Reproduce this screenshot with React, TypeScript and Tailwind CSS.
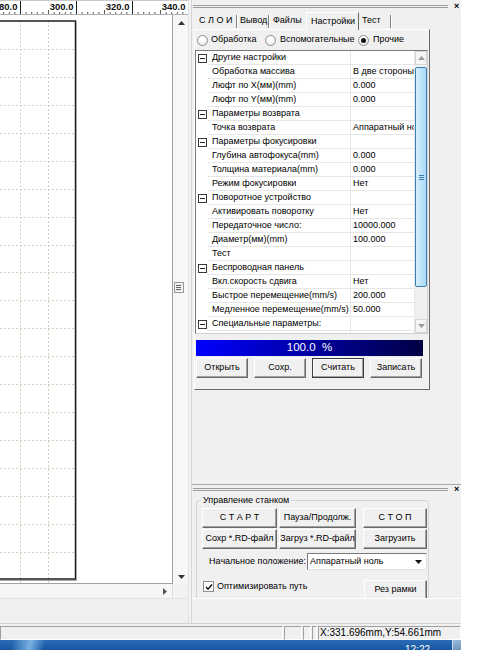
import React from "react";

type Row = { group?: boolean; name: string; value?: string };

const rows: Row[] = [
  { group: true, name: "Другие настройки" },
  { name: "Обработка массива", value: "В две стороны" },
  { name: "Люфт по X(мм)(mm)", value: "0.000" },
  { name: "Люфт по Y(мм)(mm)", value: "0.000" },
  { group: true, name: "Параметры возврата" },
  { name: "Точка возврата", value: "Аппаратный ноль" },
  { group: true, name: "Параметры фокусировки" },
  { name: "Глубина автофокуса(mm)", value: "0.000" },
  { name: "Толщина материала(mm)", value: "0.000" },
  { name: "Режим фокусировки", value: "Нет" },
  { group: true, name: "Поворотное устройство" },
  { name: "Активировать поворотку", value: "Нет" },
  { name: "Передаточное число:", value: "10000.000" },
  { name: "Диаметр(мм)(mm)", value: "100.000" },
  { name: "Тест" },
  { group: true, name: "Беспроводная панель" },
  { name: "Вкл.скорость сдвига", value: "Нет" },
  { name: "Быстрое перемещение(mm/s)", value: "200.000" },
  { name: "Медленное перемещение(mm/s)", value: "50.000" },
  { group: true, name: "Специальные параметры:" },
  { name: "" },
];

function Ruler() {
  const majors = [
    { x: 20.5, l: "280.0" },
    { x: 76.5, l: "300.0" },
    { x: 132.5, l: "320.0" },
    { x: 188.5, l: "340.0" },
  ];
  const ticks: number[] = [];
  for (let i = -3; i < 30; i++) ticks.push(i);
  return (
    <svg width="188" height="15" className="block bg-white">
      <line x1="0" y1="0.5" x2="188" y2="0.5" stroke="#c8c8c8" />
      {ticks.map((i) => {
        const x = 20.5 + i * 5.6;
        if (i % 10 === 0) return null;
        const h = i % 5 === 0 ? 4 : 2;
        return <line key={i} x1={x} y1={14 - h} x2={x} y2={14} stroke="#333" strokeWidth="0.8" />;
      })}
      {majors.map((m) => (
        <g key={m.l}>
          <line x1={m.x} y1="1" x2={m.x} y2="15" stroke="#222" />
          <text x={m.x - 3} y="10" textAnchor="end" fontSize="9.5" fontWeight="bold" fill="#111" fontFamily="Liberation Sans, Arial, sans-serif">
            {m.l}
          </text>
        </g>
      ))}
      <line x1="0" y1="14.5" x2="188" y2="14.5" stroke="#b0b0b0" />
    </svg>
  );
}

function CanvasDrawing() {
  const hLines: number[] = [];
  for (let y = 34; y < 564; y += 27.93) hLines.push(Math.round(y) + 0.5);
  return (
    <svg width="173" height="569" className="block bg-white">
      {[20.5, 48.5].map((x) => (
        <line key={x} x1={x} y1="6" x2={x} y2="569" stroke="#cfcfbd" strokeDasharray="2 2" />
      ))}
      {hLines.map((y) => (
        <line key={y} x1="0" y1={y} x2="75" y2={y} stroke="#cfcfbd" strokeDasharray="2 2" />
      ))}
      <rect x="-2" y="6" width="77.5" height="558" fill="none" stroke="#1e1e1e" strokeWidth="1.5" />
      <line x1="0" y1="565.5" x2="77" y2="565.5" stroke="#a8a8a8" />
      <line x1="76.5" y1="7" x2="76.5" y2="566" stroke="#a8a8a8" />
      <line x1="172.5" y1="0" x2="172.5" y2="569" stroke="#a0a0a0" />
      <line x1="0" y1="568.5" x2="173" y2="568.5" stroke="#a0a0a0" />
    </svg>
  );
}

function Tri({ dir, color = "#404040" }: { dir: "up" | "down" | "right"; color?: string }) {
  const pts = dir === "up" ? "0,4 3.5,0 7,4" : dir === "down" ? "0,0 7,0 3.5,4" : "0,0 4,3.5 0,7";
  const w = dir === "right" ? 4 : 7;
  const h = dir === "right" ? 7 : 4;
  return (
    <svg width={w} height={h} className="block">
      <polygon points={pts} fill={color} />
    </svg>
  );
}

function CanvasColumn() {
  return (
    <div className="w-[188px] flex flex-col">
      <Ruler />
      <div className="flex h-[569px]">
        <CanvasDrawing />
        <div className="w-[15px] bg-[#f7f7f7] flex flex-col items-center">
          <div className="mt-[6px] ml-[1px]">
            <Tri dir="up" color="#333" />
          </div>
          <div className="mt-[257px] mr-[4px] w-[10px] h-[11px] border border-[#9a9a9a] bg-[#f0f0f0] flex flex-col items-center justify-center gap-[1px]">
            <div className="w-[5px] h-[1px] bg-[#666]" />
            <div className="w-[5px] h-[1px] bg-[#666]" />
            <div className="w-[5px] h-[1px] bg-[#666]" />
          </div>
          <div className="mt-auto mb-[5px] ml-[1px]">
            <Tri dir="down" color="#333" />
          </div>
        </div>
      </div>
      <div className="h-[14px] flex">
        <div className="w-[173px] bg-[#f6f6f6] flex items-center justify-end pr-[5px] border-r border-[#dcdcdc]">
          <Tri dir="right" color="#555" />
        </div>
        <div className="flex-1 bg-[#f2f2f2]" />
      </div>
      <div className="flex-1 border-t border-[#e2e2e2]" />
    </div>
  );
}

function Radio({ checked }: { checked?: boolean }) {
  return (
    <span className="w-[11px] h-[11px] shrink-0 rounded-full border border-[#8e8f8f] bg-[radial-gradient(circle_at_40%_35%,#ffffff_30%,#dcdcdc)] flex items-center justify-center">
      {checked && <span className="w-[5px] h-[5px] rounded-full bg-[#111]" />}
    </span>
  );
}

function Btn({ label, w, focused, className = "" }: { label: string; w: string; focused?: boolean; className?: string }) {
  return (
    <div
      className={`${w} h-[20px] shrink-0 flex items-center justify-center whitespace-nowrap bg-[#f0f0f0] ${
        focused
          ? "border border-[#3c3c3c] shadow-[inset_-1px_-1px_0_#a0a0a0,inset_1px_1px_0_#ffffff]"
          : "border-t border-l border-[#ffffff] border-b border-r border-b-[#696969] border-r-[#696969] shadow-[inset_-1px_-1px_0_#a0a0a0]"
      } ${className}`}
    >
      {label}
    </div>
  );
}

function DoubleLine({ w }: { w: string }) {
  return <div className={`${w} h-[3px] border-y border-[#9c9c9c]`} />;
}

function PropertyGrid() {
  return (
    <div className="w-[233px] h-[284px] flex border border-[#7a7a7a] border-r-[#d0d0d0] border-b-[#d0d0d0] bg-white overflow-hidden">
      <div className="flex-1 flex flex-col overflow-hidden">
        {rows.map((r, i) => (
          <div key={i} className="h-[14px] shrink-0 flex">
            <div className="w-[12px] shrink-0 flex items-center justify-center">
              {r.group && (
                <div className="w-[9px] h-[9px] ml-[1px] border border-[#3a3a3a] flex items-center justify-center">
                  <div className="w-[5px] h-[1px] bg-[#222]" />
                </div>
              )}
            </div>
            <div className="w-[142px] shrink-0 border-b border-[#e6e6e6] pl-[4px] leading-[13px] whitespace-nowrap overflow-hidden">
              {r.name}
            </div>
            <div className="flex-1 border-b border-l border-[#e6e6e6] pl-[2px] leading-[13px] whitespace-nowrap overflow-hidden">
              {r.value}
            </div>
          </div>
        ))}
      </div>
      <div className="w-[13px] shrink-0 bg-[#f0f0f0] flex flex-col border-l border-[#e6e6e6]">
        <div className="h-[14px] border border-[#d6d6d6] bg-[#f4f4f4] flex items-center justify-center">
          <Tri dir="up" color="#9a9a9a" />
        </div>
        <div className="mt-[2px] h-[220px] rounded-[2px] border border-[#3c7fb1] bg-[linear-gradient(90deg,#d9effc,#a7d8f8)] flex flex-col items-center justify-center gap-[1px]">
          <div className="w-[5px] h-[1px] bg-[#3c7fb1]" />
          <div className="w-[5px] h-[1px] bg-[#3c7fb1]" />
          <div className="w-[5px] h-[1px] bg-[#3c7fb1]" />
        </div>
        <div className="mt-auto h-[14px] border border-[#d6d6d6] bg-[#f4f4f4] flex items-center justify-center">
          <Tri dir="down" color="#9a9a9a" />
        </div>
      </div>
    </div>
  );
}

function Tab({ label, w, pl }: { label: string; w: string; pl: string }) {
  return <div className={`${w} ${pl} h-[16px] flex items-center whitespace-nowrap`}>{label}</div>;
}

function Sep() {
  return <div className="w-[2px] h-[13px] mb-[1px] border-l border-[#808080] border-r border-r-white" />;
}

function UpperPanel() {
  return (
    <div className="h-[484px] flex flex-col">
      <div className="h-[13px] flex items-center pl-[1px]">
        <DoubleLine w="w-[255px]" />
        <span className="ml-[6px] text-[9px] font-bold leading-none">×</span>
      </div>
      <div className="h-[16px] flex items-end pl-[4px] relative z-10">
        <Tab label="С Л О И" w="w-[40px]" pl="pl-[3px]" />
        <Sep />
        <Tab label="Вывод" w="w-[30px]" pl="pl-[2px]" />
        <Sep />
        <Tab label="Файлы" w="w-[36px]" pl="pl-[3px]" />
        <div className="w-[53px] h-[18px] -mb-[1px] pl-[4px] flex items-center border-t border-l border-white border-r border-r-[#696969] bg-[#f0f0f0] whitespace-nowrap">
          Настройки
        </div>
        <Tab label="Тест" w="w-[31px]" pl="pl-[3px]" />
        <Sep />
      </div>
      <div className="ml-[2px] w-[236px] h-[361px] flex flex-col border-t border-l border-white border-b border-r border-b-[#696969] border-r-[#696969]">
        <div className="h-[20px] flex items-center pl-[2px]">
          <div className="w-[68px] flex items-center gap-[3px]">
            <Radio />
            <span>Обработка</span>
          </div>
          <div className="w-[93px] flex items-center gap-[4px]">
            <Radio />
            <span>Вспомогательные</span>
          </div>
          <div className="flex items-center gap-[4px]">
            <Radio checked />
            <span>Прочие</span>
          </div>
        </div>
        <PropertyGrid />
        <div className="mt-[6px] ml-[1px] w-[227px] h-[16px] bg-[linear-gradient(90deg,#0000ff,#000044)] flex items-center justify-center text-white text-[11.5px] whitespace-pre">
          100.0  %
        </div>
        <div className="mt-[2px] ml-[1px] flex gap-[6px]">
          <Btn label="Открыть" w="w-[52px]" />
          <Btn label="Сохр." w="w-[52px]" />
          <Btn label="Считать" w="w-[52px]" focused />
          <Btn label="Записать" w="w-[52px]" />
        </div>
      </div>
    </div>
  );
}

function LowerPanel() {
  return (
    <div className="h-[114px] border-t border-[#a9a9a9] overflow-hidden flex flex-col">
      <div className="h-[12px] flex items-center pl-[1px]">
        <DoubleLine w="w-[255px]" />
        <span className="ml-[6px] text-[9px] font-bold leading-none">×</span>
      </div>
      <div className="mt-[6px] ml-[4px] w-[233px] h-[120px] relative border border-[#cdd7dc] rounded-[3px] pt-[7px] pl-[5px]">
        <span className="absolute -top-[7px] left-[4px] px-[2px] bg-[#f0f0f0] whitespace-nowrap">Управление станком</span>
        <div className="flex">
          <Btn label="С Т А Р Т" w="w-[75px]" />
          <Btn label="Пауза/Продолж." w="w-[77px]" className="ml-[2px]" />
          <Btn label="С Т О П" w="w-[64px]" className="ml-[7px]" />
        </div>
        <div className="flex mt-[1px]">
          <Btn label="Сохр *.RD-файл" w="w-[75px]" />
          <Btn label="Загруз *.RD-файл" w="w-[77px]" className="ml-[2px]" />
          <Btn label="Загрузить" w="w-[64px]" className="ml-[7px]" />
        </div>
        <div className="flex items-center mt-[4px]">
          <span className="w-[104px] text-right whitespace-nowrap">Начальное положение:</span>
          <div className="ml-[1px] w-[120px] h-[17px] bg-white border border-[#7a7a7a] border-b-[#e0e0e0] border-r-[#e0e0e0] flex items-center">
            <span className="pl-[2px] flex-1 whitespace-nowrap">Аппаратный ноль</span>
            <div className="w-[15px] h-full flex items-center justify-center">
              <Tri dir="down" color="#111" />
            </div>
          </div>
        </div>
        <div className="flex items-start mt-[10px]">
          <div className="ml-[1px] mt-[1px] w-[11px] h-[11px] shrink-0 border border-[#8e8f8f] bg-white flex items-center justify-center">
            <svg width="8" height="8" viewBox="0 0 8 8">
              <path d="M1 4 L3 6.2 L7 1.5" stroke="#111" strokeWidth="1.5" fill="none" />
            </svg>
          </div>
          <span className="ml-[3px] w-[147px] leading-[12px] whitespace-nowrap">Оптимизировать путь</span>
          <Btn label="Рез рамки" w="w-[63px]" />
        </div>
      </div>
    </div>
  );
}

function DockColumn() {
  return (
    <div className="w-[269px] flex flex-col">
      <UpperPanel />
      <LowerPanel />
      <div className="flex-1 border-t border-white" />
    </div>
  );
}

function Splitter() {
  return <div className="w-[4px] border-l border-[#e0e0e0] border-r border-r-[#d4d4d4] bg-[#f4f4f4]" />;
}

function Cell({ w, children }: { w: string; children?: React.ReactNode }) {
  return (
    <div className={`${w} h-[14px] shrink-0 border-t border-l border-[#a0a0a0] border-b border-r border-b-white border-r-white flex items-center overflow-hidden whitespace-nowrap`}>
      {children}
    </div>
  );
}

function StatusBar() {
  return (
    <div className="h-[17px] border-t border-[#d2d2d2] flex items-end gap-[1px] pb-0">
      <Cell w="w-[283px]" />
      <Cell w="w-[18px]" />
      <Cell w="w-[8px]" />
      <Cell w="w-[5px]" />
      <Cell w="flex-1">
        <span className="pl-[1px] text-[10px] leading-none">X:331.696mm,Y:54.661mm</span>
      </Cell>
    </div>
  );
}

function Taskbar() {
  return (
    <div className="h-[10px] flex overflow-hidden">
      <div className="flex-1 relative bg-[linear-gradient(180deg,#2a6bb8,#17579f)] overflow-hidden">
        <div className="absolute left-[12px] top-0 w-[40px] h-[10px] bg-[linear-gradient(100deg,transparent,#8fc4ee_45%,transparent_80%)] opacity-80" />
        <span className="absolute left-[405px] top-[5px] text-white text-[10px] leading-none">12:22</span>
      </div>
      <div className="w-[9px] bg-[linear-gradient(180deg,#9ab9d8,#6f95bd)] border-l border-[#cfe0f0]" />
    </div>
  );
}

export default function App() {
  return (
    <div className="w-[494px] h-[650px] bg-white flex overflow-hidden font-['Liberation_Sans',Arial,sans-serif] text-[9px] text-[#000]">
      <div className="w-[461px] h-[650px] flex flex-col bg-[#f0f0f0]">
        <div className="h-[623px] flex">
          <CanvasColumn />
          <Splitter />
          <DockColumn />
        </div>
        <StatusBar />
        <Taskbar />
      </div>
    </div>
  );
}
